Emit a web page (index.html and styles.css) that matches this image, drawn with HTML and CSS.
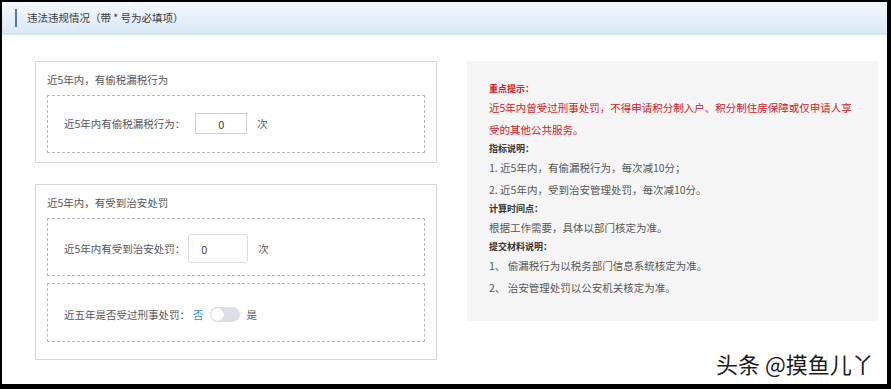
FILE: index.html
```html
<!DOCTYPE html>
<html lang="zh-CN">
<head>
<meta charset="utf-8">
<title>违法违规情况</title>
<link rel="stylesheet" href="styles.css">
</head>
<body>
<div class="frame">
  <div class="header">
    <span class="bar"></span>
    <span class="htitle">违法违规情况（带 * 号为必填项）</span>
  </div>
  <div class="main">
    <div class="left">
      <section class="box box1">
        <div class="box-title">近5年内，有偷税漏税行为</div>
        <div class="dash d1">
          <div class="row">
            <span class="label">近5年内有偷税漏税行为：</span>
            <span class="input in1">0</span>
            <span class="unit u1">次</span>
          </div>
        </div>
      </section>
      <section class="box box2">
        <div class="box-title">近5年内，有受到治安处罚</div>
        <div class="dash d2">
          <div class="row">
            <span class="label">近5年内有受到治安处罚：</span>
            <span class="input in2">0</span>
            <span class="unit u2">次</span>
          </div>
        </div>
        <div class="dash d3">
          <div class="row">
            <span class="label">近五年是否受过刑事处罚：</span>
            <span class="no">否</span>
            <span class="toggle"><span class="knob"></span></span>
            <span class="yes">是</span>
          </div>
        </div>
      </section>
    </div>
    <div class="panel">
      <div class="plabel red">重点提示：</div>
      <p class="ptext red">近5年内曾受过刑事处罚，不得申请积分制入户、积分制住房保障或仅申请人享受的其他公共服务。</p>
      <div class="plabel">指标说明：</div>
      <p class="ptext">1. 近5年内，有偷漏税行为，每次减10分；</p>
      <p class="ptext">2. 近5年内，受到治安管理处罚，每次减10分。</p>
      <div class="plabel">计算时间点：</div>
      <p class="ptext">根据工作需要，具体以部门核定为准。</p>
      <div class="plabel">提交材料说明：</div>
      <p class="ptext">1、 偷漏税行为以税务部门信息系统核定为准。</p>
      <p class="ptext">2、 治安管理处罚以公安机关核定为准。</p>
    </div>
  </div>
  <div class="watermark">头条 @摸鱼儿丫</div>
</div>
</body>
</html>
```
FILE: styles.css
```css
* { box-sizing: border-box; }
html, body { margin: 0; padding: 0; }
body {
  background: #000;
  font-family: "Noto Sans CJK SC", "Noto Sans", sans-serif;
  width: 891px;
  height: 389px;
  overflow: hidden;
}
.frame {
  position: relative;
  margin: 2px 4px 0 2px;
  width: 885px;
  height: 382px;
  background: #fff;
  overflow: hidden;
}
.header {
  height: 33px;
  border-bottom: 2px solid #d3e3f3;
  background: linear-gradient(#f3f7fd, #dbe9f7);
  display: flex;
  align-items: center;
  padding-left: 13px;
}
.bar {
  width: 2px;
  height: 18px;
  background: #56779f;
  margin-right: 10px;
}
.htitle {
  font-size: 10.5px;
  color: #3a3a3a;
  line-height: 31px;
}
.main {
  display: grid;
  grid-template-columns: 402px 411px;
  column-gap: 30px;
  align-items: start;
  padding: 26px 9px 0 33px;
}
.box {
  border: 1px solid #d6d6d6;
  padding: 8px 11px 9px 11px;
}
.box2 {
  margin-top: 21px;
  padding-bottom: 17px;
}
.box-title {
  font-size: 10.5px;
  line-height: 20px;
  color: #555;
  margin-bottom: 5px;
}
.dash {
  border: 1px dashed #b3b8c9;
  padding-left: 16px;
}
.d1 { height: 58px; padding-top: 17px; }
.d2 { height: 58px; padding-top: 15px; }
.d3 { height: 59px; padding-top: 20px; margin-top: 7px; }
.row {
  display: flex;
  align-items: center;
  font-size: 10.5px;
  color: #555;
}
.label { line-height: 21px; }
.input {
  border: 1px solid #cfcfcf;
  background: #fff;
  font-size: 11px;
  color: #444;
  display: flex;
  align-items: center;
}
.in1 {
  width: 52px;
  height: 21px;
  margin-left: 10px;
  justify-content: center;
}
.in2 {
  width: 60px;
  height: 29px;
  margin-left: 3px;
  border-radius: 3px;
  border-color: #dcdcdc;
  padding-left: 12px;
}
.unit { margin-left: 10px; }
.d3 .row { height: 20px; }
.no { color: #3a8fc9; margin-left: 3px; }
.toggle {
  display: flex;
  align-items: center;
  width: 30px;
  height: 15px;
  border-radius: 8px;
  background: #dcdfe7;
  padding: 1px;
  margin-left: 6px;
}
.knob {
  width: 13px;
  height: 13px;
  border-radius: 50%;
  background: #fff;
  box-shadow: 0 0 1px rgba(0,0,0,0.2);
}
.yes { margin-left: 7px; }
.panel {
  background: #f5f5f5;
  padding: 20px 22px 22px 22px;
}
.plabel {
  font-size: 9px;
  font-weight: bold;
  line-height: 16px;
  color: #333;
}
.ptext {
  margin: 0;
  font-size: 10.5px;
  line-height: 22px;
  color: #555;
}
.red { color: #d5161f; }
.watermark {
  position: absolute;
  left: 714px;
  top: 346px;
  font-size: 22px;
  line-height: 30px;
  color: #1c1c1c;
  white-space: nowrap;
  text-shadow: 0 0 2px #fff, 0 0 2px #fff, 1px 1px 0 #fff, -1px -1px 0 #fff;
}
```
